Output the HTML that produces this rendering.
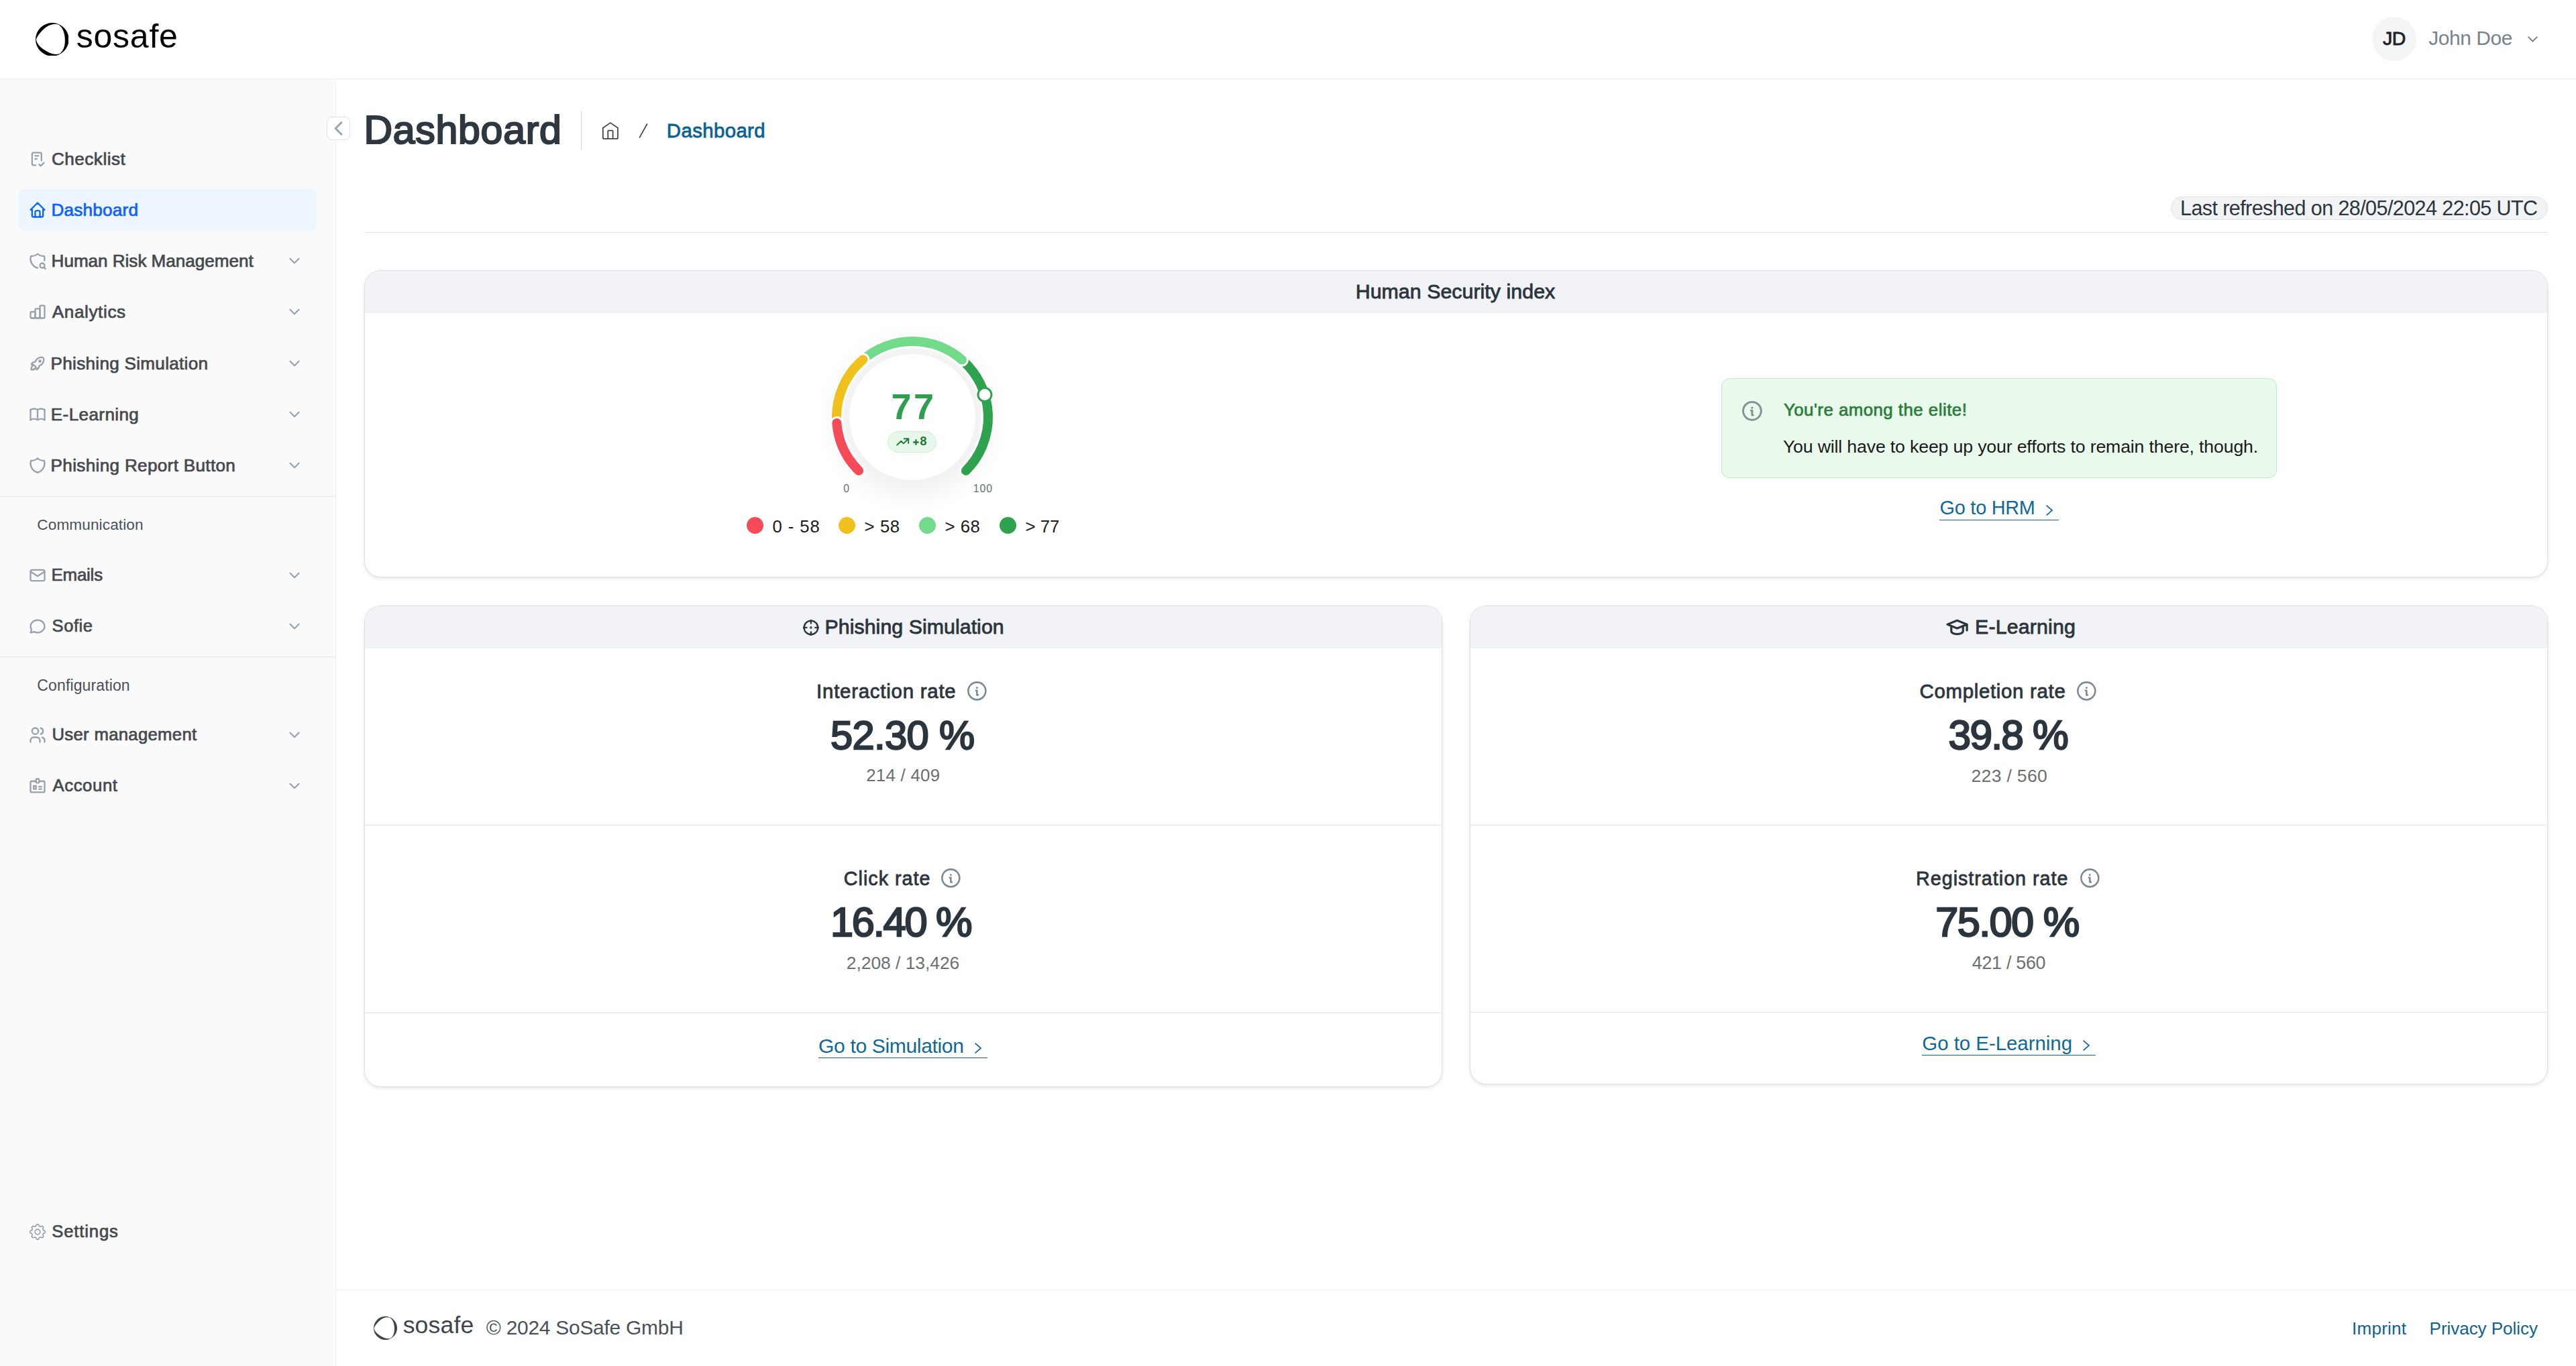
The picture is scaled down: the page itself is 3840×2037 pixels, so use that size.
<!DOCTYPE html><html><head><meta charset="utf-8"><style>
html,body{margin:0;padding:0;width:3840px;height:2037px;overflow:hidden;background:#fff;font-family:"Liberation Sans", sans-serif;}
.t{position:absolute;white-space:nowrap;}
svg{display:block}
@media (max-width:2600px){html{zoom:0.5}}
</style></head><body>
<div style="position:absolute;left:0px;top:117px;width:3840px;height:1px;background:#eceef3"></div>
<svg style="position:absolute;left:52.900000000000006px;top:33.8px" width="49.6" height="49.6" viewBox="-1 -1 2 2"><path fill="#000" fill-rule="evenodd" d="M-1 0 A1 1 0 1 0 1 0 A1 1 0 1 0 -1 0Z M-0.965 -0.010 L-0.954 -0.035 L-0.943 -0.059 L-0.931 -0.083 L-0.919 -0.106 L-0.907 -0.129 L-0.894 -0.151 L-0.881 -0.173 L-0.868 -0.194 L-0.855 -0.215 L-0.842 -0.235 L-0.828 -0.255 L-0.815 -0.274 L-0.801 -0.293 L-0.788 -0.312 L-0.774 -0.330 L-0.760 -0.348 L-0.746 -0.365 L-0.732 -0.383 L-0.718 -0.400 L-0.704 -0.416 L-0.690 -0.433 L-0.676 -0.449 L-0.662 -0.465 L-0.647 -0.481 L-0.633 -0.496 L-0.619 -0.512 L-0.604 -0.527 L-0.589 -0.542 L-0.575 -0.557 L-0.560 -0.572 L-0.545 -0.586 L-0.529 -0.601 L-0.514 -0.615 L-0.499 -0.629 L-0.483 -0.643 L-0.467 -0.657 L-0.451 -0.670 L-0.434 -0.684 L-0.417 -0.697 L-0.400 -0.710 L-0.383 -0.723 L-0.365 -0.736 L-0.347 -0.748 L-0.329 -0.760 L-0.310 -0.772 L-0.292 -0.784 L-0.272 -0.795 L-0.253 -0.806 L-0.233 -0.817 L-0.212 -0.827 L-0.192 -0.837 L-0.171 -0.846 L-0.149 -0.855 L-0.128 -0.864 L-0.105 -0.872 L-0.083 -0.879 L-0.060 -0.886 L-0.037 -0.892 L-0.014 -0.898 L0.009 -0.903 L0.033 -0.908 L0.057 -0.912 L0.082 -0.915 L0.106 -0.917 L0.131 -0.919 L0.156 -0.920 L0.180 -0.920 L0.205 -0.919 L0.230 -0.917 L0.255 -0.915 L0.280 -0.912 L0.305 -0.907 L0.330 -0.902 L0.355 -0.896 L0.379 -0.888 L0.400 -0.875 L0.421 -0.860 L0.441 -0.844 L0.460 -0.827 L0.479 -0.810 L0.497 -0.792 L0.514 -0.773 L0.530 -0.754 L0.546 -0.735 L0.561 -0.715 L0.575 -0.695 L0.588 -0.674 L0.601 -0.654 L0.613 -0.633 L0.625 -0.612 L0.636 -0.591 L0.646 -0.570 L0.656 -0.548 L0.665 -0.527 L0.673 -0.506 L0.681 -0.484 L0.689 -0.463 L0.696 -0.442 L0.702 -0.420 L0.708 -0.399 L0.714 -0.378 L0.719 -0.357 L0.724 -0.336 L0.729 -0.315 L0.733 -0.295 L0.737 -0.274 L0.740 -0.254 L0.744 -0.233 L0.747 -0.213 L0.750 -0.192 L0.752 -0.172 L0.755 -0.152 L0.757 -0.132 L0.759 -0.112 L0.760 -0.092 L0.762 -0.072 L0.763 -0.052 L0.764 -0.032 L0.765 -0.012 L0.766 0.008 L0.767 0.028 L0.767 0.048 L0.767 0.068 L0.767 0.089 L0.767 0.109 L0.767 0.130 L0.766 0.150 L0.765 0.171 L0.764 0.192 L0.762 0.213 L0.760 0.234 L0.758 0.255 L0.755 0.276 L0.752 0.298 L0.749 0.320 L0.745 0.341 L0.741 0.363 L0.736 0.385 L0.731 0.407 L0.725 0.429 L0.719 0.451 L0.712 0.473 L0.705 0.495 L0.696 0.517 L0.688 0.539 L0.678 0.561 L0.668 0.583 L0.658 0.605 L0.646 0.626 L0.634 0.648 L0.621 0.669 L0.608 0.689 L0.593 0.710 L0.578 0.730 L0.563 0.749 L0.546 0.768 L0.529 0.787 L0.511 0.805 L0.492 0.822 L0.472 0.838 L0.451 0.852 L0.428 0.863 L0.404 0.870 L0.379 0.876 L0.354 0.881 L0.329 0.885 L0.304 0.888 L0.279 0.890 L0.254 0.891 L0.229 0.892 L0.204 0.891 L0.179 0.890 L0.155 0.888 L0.131 0.885 L0.107 0.881 L0.083 0.877 L0.060 0.873 L0.036 0.868 L0.014 0.862 L-0.009 0.856 L-0.031 0.849 L-0.053 0.842 L-0.075 0.835 L-0.096 0.827 L-0.117 0.820 L-0.137 0.811 L-0.157 0.803 L-0.177 0.794 L-0.197 0.785 L-0.217 0.776 L-0.236 0.766 L-0.255 0.757 L-0.273 0.747 L-0.292 0.737 L-0.310 0.727 L-0.328 0.717 L-0.346 0.707 L-0.364 0.697 L-0.382 0.686 L-0.400 0.676 L-0.417 0.665 L-0.435 0.654 L-0.452 0.643 L-0.469 0.632 L-0.487 0.621 L-0.504 0.609 L-0.521 0.597 L-0.538 0.585 L-0.555 0.573 L-0.572 0.560 L-0.589 0.548 L-0.606 0.535 L-0.623 0.521 L-0.640 0.507 L-0.657 0.493 L-0.674 0.479 L-0.690 0.464 L-0.707 0.448 L-0.723 0.433 L-0.739 0.416 L-0.755 0.400 L-0.771 0.383 L-0.786 0.365 L-0.801 0.347 L-0.816 0.328 L-0.831 0.309 L-0.845 0.289 L-0.858 0.269 L-0.871 0.248 L-0.884 0.227 L-0.896 0.205 L-0.907 0.183 L-0.917 0.160 L-0.927 0.137 L-0.936 0.113 L-0.944 0.089 L-0.951 0.065 L-0.957 0.040 L-0.962 0.015Z"/></svg>
<div class="t" style="left:113.7px;top:29.4px;font-size:50.0px;line-height:50.0px;letter-spacing:0.78px;font-weight:400;color:#000;">sosafe</div>
<div style="position:absolute;left:3536px;top:25px;width:66px;height:66px;border-radius:50%;background:#f4f5f5"></div>
<div class="t" style="left:3552.0px;top:42.9px;font-size:28.5px;line-height:28.5px;letter-spacing:-0.6px;font-weight:400;color:#1d2125;-webkit-text-stroke:0.85px #1d2125;">JD</div>
<div class="t" style="left:3620.2px;top:41.6px;font-size:30.0px;line-height:30.0px;letter-spacing:-0.46px;font-weight:400;color:#79828b;">John Doe</div>
<svg style="position:absolute;left:3762.5px;top:46px;" width="25" height="25" viewBox="0 0 24 24" fill="none" stroke="#79828b" stroke-width="2" stroke-linecap="round" stroke-linejoin="round"><path d="M6 9l6 6l6 -6"/></svg>
<div style="position:absolute;left:0px;top:118px;width:500px;height:1919px;background:#fafafa;border-right:1px solid #eef0f5;border-top-right-radius:6px"></div>
<div style="position:absolute;left:28px;top:282px;width:444px;height:62px;border-radius:9px;background:#edf5ff"></div>
<svg style="position:absolute;left:42px;top:223px;" width="28" height="28" viewBox="0 0 24 24" fill="none" stroke="#98a2ad" stroke-width="2" stroke-linecap="round" stroke-linejoin="round"><path d="M9.615 20h-2.615a2 2 0 0 1 -2 -2v-12a2 2 0 0 1 2 -2h8a2 2 0 0 1 2 2v8"/><path d="M14 19l2 2l4 -4"/><path d="M9 8h4"/><path d="M9 12h2"/></svg>
<div class="t" style="left:76.9px;top:223.9px;font-size:26.1px;line-height:26.1px;letter-spacing:0.51px;font-weight:400;color:#46494e;-webkit-text-stroke:0.73px #46494e;">Checklist</div>
<svg style="position:absolute;left:42px;top:299px;" width="28" height="28" viewBox="0 0 24 24" fill="none" stroke="#0e62fa" stroke-width="2" stroke-linecap="round" stroke-linejoin="round"><path d="M5 12l-2 0l9 -9l9 9l-2 0"/><path d="M5 12v7a2 2 0 0 0 2 2h10a2 2 0 0 0 2 -2v-7"/><path d="M9 21v-6a2 2 0 0 1 2 -2h2a2 2 0 0 1 2 2v6"/></svg>
<div class="t" style="left:76.4px;top:299.9px;font-size:26.1px;line-height:26.1px;letter-spacing:0.25px;font-weight:400;color:#0e62fa;-webkit-text-stroke:0.73px #0e62fa;">Dashboard</div>
<svg style="position:absolute;left:42px;top:375px;" width="28" height="28" viewBox="0 0 24 24" fill="none" stroke="#98a2ad" stroke-width="2" stroke-linecap="round" stroke-linejoin="round"><path d="M12 21a12 12 0 0 1 -8.5 -15a12 12 0 0 0 8.5 -3a12 12 0 0 0 8.5 3c.539 1.832 .627 3.747 .283 5.588"/><path d="M15 18a3 3 0 1 0 6 0a3 3 0 1 0 -6 0"/><path d="M20.2 20.2l1.8 1.8"/></svg>
<div class="t" style="left:76.6px;top:375.9px;font-size:26.1px;line-height:26.1px;letter-spacing:-0.03px;font-weight:400;color:#46494e;-webkit-text-stroke:0.73px #46494e;">Human Risk Management</div>
<svg style="position:absolute;left:425.6px;top:376px;" width="26" height="26" viewBox="0 0 24 24" fill="none" stroke="#98a2ad" stroke-width="2" stroke-linecap="round" stroke-linejoin="round"><path d="M6 9l6 6l6 -6"/></svg>
<svg style="position:absolute;left:42px;top:451px;" width="28" height="28" viewBox="0 0 24 24" fill="none" stroke="#98a2ad" stroke-width="2" stroke-linecap="round" stroke-linejoin="round"><path d="M3 13a1 1 0 0 1 1 -1h4a1 1 0 0 1 1 1v6a1 1 0 0 1 -1 1h-4a1 1 0 0 1 -1 -1z"/><path d="M9 9a1 1 0 0 1 1 -1h4a1 1 0 0 1 1 1v10a1 1 0 0 1 -1 1h-4a1 1 0 0 1 -1 -1z"/><path d="M15 5a1 1 0 0 1 1 -1h4a1 1 0 0 1 1 1v14a1 1 0 0 1 -1 1h-4a1 1 0 0 1 -1 -1z"/><path d="M4 20h14"/></svg>
<div class="t" style="left:77.8px;top:451.9px;font-size:26.1px;line-height:26.1px;letter-spacing:0.61px;font-weight:400;color:#46494e;-webkit-text-stroke:0.73px #46494e;">Analytics</div>
<svg style="position:absolute;left:425.6px;top:452px;" width="26" height="26" viewBox="0 0 24 24" fill="none" stroke="#98a2ad" stroke-width="2" stroke-linecap="round" stroke-linejoin="round"><path d="M6 9l6 6l6 -6"/></svg>
<svg style="position:absolute;left:42px;top:528px;" width="28" height="28" viewBox="0 0 24 24" fill="none" stroke="#98a2ad" stroke-width="2" stroke-linecap="round" stroke-linejoin="round"><path d="M4 13a8 8 0 0 1 7 7a6 6 0 0 0 3 -5a9 9 0 0 0 6 -8a3 3 0 0 0 -3 -3a9 9 0 0 0 -8 6a6 6 0 0 0 -5 3"/><path d="M7 14a6 6 0 0 0 -3 6a6 6 0 0 0 6 -3"/><path d="M14 9a1 1 0 1 0 2 0a1 1 0 1 0 -2 0"/></svg>
<div class="t" style="left:75.6px;top:528.9px;font-size:26.1px;line-height:26.1px;letter-spacing:0.29px;font-weight:400;color:#46494e;-webkit-text-stroke:0.73px #46494e;">Phishing Simulation</div>
<svg style="position:absolute;left:425.6px;top:529px;" width="26" height="26" viewBox="0 0 24 24" fill="none" stroke="#98a2ad" stroke-width="2" stroke-linecap="round" stroke-linejoin="round"><path d="M6 9l6 6l6 -6"/></svg>
<svg style="position:absolute;left:42px;top:604px;" width="28" height="28" viewBox="0 0 24 24" fill="none" stroke="#98a2ad" stroke-width="2" stroke-linecap="round" stroke-linejoin="round"><path d="M3 19a9 9 0 0 1 9 0a9 9 0 0 1 9 0"/><path d="M3 6a9 9 0 0 1 9 0a9 9 0 0 1 9 0"/><path d="M3 6l0 13"/><path d="M12 6l0 13"/><path d="M21 6l0 13"/></svg>
<div class="t" style="left:75.8px;top:604.9px;font-size:26.1px;line-height:26.1px;letter-spacing:0.38px;font-weight:400;color:#46494e;-webkit-text-stroke:0.73px #46494e;">E-Learning</div>
<svg style="position:absolute;left:425.6px;top:605px;" width="26" height="26" viewBox="0 0 24 24" fill="none" stroke="#98a2ad" stroke-width="2" stroke-linecap="round" stroke-linejoin="round"><path d="M6 9l6 6l6 -6"/></svg>
<svg style="position:absolute;left:42px;top:680px;" width="28" height="28" viewBox="0 0 24 24" fill="none" stroke="#98a2ad" stroke-width="2" stroke-linecap="round" stroke-linejoin="round"><path d="M12 3a12 12 0 0 0 8.5 3a12 12 0 0 1 -8.5 15a12 12 0 0 1 -8.5 -15a12 12 0 0 0 8.5 -3"/></svg>
<div class="t" style="left:75.6px;top:680.9px;font-size:26.1px;line-height:26.1px;letter-spacing:0.33px;font-weight:400;color:#46494e;-webkit-text-stroke:0.73px #46494e;">Phishing Report Button</div>
<svg style="position:absolute;left:425.6px;top:681px;" width="26" height="26" viewBox="0 0 24 24" fill="none" stroke="#98a2ad" stroke-width="2" stroke-linecap="round" stroke-linejoin="round"><path d="M6 9l6 6l6 -6"/></svg>
<svg style="position:absolute;left:42px;top:843.7px;" width="28" height="28" viewBox="0 0 24 24" fill="none" stroke="#98a2ad" stroke-width="2" stroke-linecap="round" stroke-linejoin="round"><path d="M3 7a2 2 0 0 1 2 -2h14a2 2 0 0 1 2 2v10a2 2 0 0 1 -2 2h-14a2 2 0 0 1 -2 -2v-10z"/><path d="M3 7l9 6l9 -6"/></svg>
<div class="t" style="left:76.6px;top:844.8px;font-size:25.9px;line-height:25.9px;letter-spacing:-0.24px;font-weight:400;color:#46494e;-webkit-text-stroke:0.73px #46494e;">Emails</div>
<svg style="position:absolute;left:425.6px;top:844.7px;" width="26" height="26" viewBox="0 0 24 24" fill="none" stroke="#98a2ad" stroke-width="2" stroke-linecap="round" stroke-linejoin="round"><path d="M6 9l6 6l6 -6"/></svg>
<svg style="position:absolute;left:42px;top:919.7px;" width="28" height="28" viewBox="0 0 24 24" fill="none" stroke="#98a2ad" stroke-width="2" stroke-linecap="round" stroke-linejoin="round"><path d="M3 20l1.3 -3.9c-2.324 -3.437 -1.426 -7.872 2.1 -10.374c3.526 -2.501 8.59 -2.296 11.845 .48c3.255 2.777 3.695 7.266 1.029 10.501c-2.666 3.235 -7.615 4.215 -11.574 2.293l-4.7 1"/></svg>
<div class="t" style="left:77.6px;top:920.9px;font-size:25.5px;line-height:25.5px;letter-spacing:0.55px;font-weight:400;color:#46494e;-webkit-text-stroke:0.71px #46494e;">Sofie</div>
<svg style="position:absolute;left:425.6px;top:920.7px;" width="26" height="26" viewBox="0 0 24 24" fill="none" stroke="#98a2ad" stroke-width="2" stroke-linecap="round" stroke-linejoin="round"><path d="M6 9l6 6l6 -6"/></svg>
<svg style="position:absolute;left:42px;top:1082px;" width="28" height="28" viewBox="0 0 24 24" fill="none" stroke="#98a2ad" stroke-width="2" stroke-linecap="round" stroke-linejoin="round"><path d="M5 7a4 4 0 1 0 8 0a4 4 0 1 0 -8 0"/><path d="M3 21v-2a4 4 0 0 1 4 -4h4a4 4 0 0 1 4 4v2"/><path d="M16 3.13a4 4 0 0 1 0 7.75"/><path d="M21 21v-2a4 4 0 0 0 -3 -3.85"/></svg>
<div class="t" style="left:77.5px;top:1083.1px;font-size:25.7px;line-height:25.7px;letter-spacing:0.31px;font-weight:400;color:#46494e;-webkit-text-stroke:0.72px #46494e;">User management</div>
<svg style="position:absolute;left:425.6px;top:1083px;" width="26" height="26" viewBox="0 0 24 24" fill="none" stroke="#98a2ad" stroke-width="2" stroke-linecap="round" stroke-linejoin="round"><path d="M6 9l6 6l6 -6"/></svg>
<svg style="position:absolute;left:42px;top:1158px;" width="28" height="28" viewBox="0 0 24 24" fill="none" stroke="#98a2ad" stroke-width="2" stroke-linecap="round" stroke-linejoin="round"><path d="M7 12h3v4h-3z"/><path d="M10 6h-6a1 1 0 0 0 -1 1v12a1 1 0 0 0 1 1h16a1 1 0 0 0 1 -1v-12a1 1 0 0 0 -1 -1h-6"/><path d="M10 4a1 1 0 0 1 1 -1h2a1 1 0 0 1 1 1v3a1 1 0 0 1 -1 1h-2a1 1 0 0 1 -1 -1z"/><path d="M14 13h3"/><path d="M14 16h3"/></svg>
<div class="t" style="left:78.5px;top:1159.1px;font-size:25.7px;line-height:25.7px;letter-spacing:0.6px;font-weight:400;color:#46494e;-webkit-text-stroke:0.72px #46494e;">Account</div>
<svg style="position:absolute;left:425.6px;top:1159px;" width="26" height="26" viewBox="0 0 24 24" fill="none" stroke="#98a2ad" stroke-width="2" stroke-linecap="round" stroke-linejoin="round"><path d="M6 9l6 6l6 -6"/></svg>
<div style="position:absolute;left:0px;top:740px;width:500px;height:1px;background:#e6e8ec"></div>
<div style="position:absolute;left:0px;top:979px;width:500px;height:1px;background:#e6e8ec"></div>
<div class="t" style="left:55.3px;top:772.3px;font-size:22.6px;line-height:22.6px;letter-spacing:0.11px;font-weight:400;color:#4a5058;">Communication</div>
<div class="t" style="left:55.3px;top:1010.7px;font-size:23.0px;line-height:23.0px;letter-spacing:0.13px;font-weight:400;color:#4a5058;">Configuration</div>
<svg style="position:absolute;left:42px;top:1823px;" width="28" height="28" viewBox="0 0 24 24" fill="none" stroke="#98a2ad" stroke-width="1.45" stroke-linecap="round" stroke-linejoin="round"><path d="M12.00 2.45 L12.62 2.47 L13.22 2.73 L13.67 3.61 L14.01 4.51 L14.43 4.85 L14.89 5.02 L15.34 5.23 L15.88 5.29 L16.75 4.89 L17.69 4.58 L18.30 4.82 L18.75 5.25 L19.18 5.70 L19.42 6.31 L19.11 7.25 L18.71 8.12 L18.77 8.66 L18.98 9.11 L19.15 9.57 L19.49 9.99 L20.39 10.33 L21.27 10.78 L21.53 11.38 L21.55 12.00 L21.53 12.62 L21.27 13.22 L20.39 13.67 L19.49 14.01 L19.15 14.43 L18.98 14.89 L18.77 15.34 L18.71 15.87 L19.11 16.75 L19.42 17.69 L19.18 18.30 L18.75 18.75 L18.30 19.18 L17.69 19.42 L16.75 19.11 L15.88 18.71 L15.34 18.77 L14.89 18.98 L14.43 19.15 L14.01 19.49 L13.67 20.39 L13.22 21.27 L12.62 21.53 L12.00 21.55 L11.38 21.53 L10.78 21.27 L10.33 20.39 L9.99 19.49 L9.57 19.15 L9.11 18.98 L8.66 18.77 L8.13 18.71 L7.25 19.11 L6.31 19.42 L5.70 19.18 L5.25 18.75 L4.82 18.30 L4.58 17.69 L4.89 16.75 L5.29 15.88 L5.23 15.34 L5.02 14.89 L4.85 14.43 L4.51 14.01 L3.61 13.67 L2.73 13.22 L2.47 12.62 L2.45 12.00 L2.47 11.38 L2.73 10.78 L3.61 10.33 L4.51 9.99 L4.85 9.57 L5.02 9.11 L5.23 8.66 L5.29 8.12 L4.89 7.25 L4.58 6.31 L4.82 5.70 L5.25 5.25 L5.70 4.82 L6.31 4.58 L7.25 4.89 L8.12 5.29 L8.66 5.23 L9.11 5.02 L9.57 4.85 L9.99 4.51 L10.33 3.61 L10.78 2.73 L11.38 2.47 L12.00 2.45 Z"/><circle cx="12" cy="12" r="3.3"/></svg>
<div class="t" style="left:77.2px;top:1824.1px;font-size:25.7px;line-height:25.7px;letter-spacing:0.84px;font-weight:400;color:#46494e;-webkit-text-stroke:0.72px #46494e;">Settings</div>
<div style="position:absolute;left:487px;top:174px;width:33px;height:33px;border:1px solid #dfe3e8;border-radius:8px;background:#fff;box-sizing:content-box"></div>
<svg style="position:absolute;left:487px;top:174px;" width="35" height="35" viewBox="0 0 24 24" fill="none" stroke="#9aa3ad" stroke-width="2" stroke-linecap="round" stroke-linejoin="round"><path d="M15 6l-6 6l6 6"/></svg>
<div class="t" style="left:542.4px;top:164.9px;font-size:59.0px;line-height:59.0px;letter-spacing:0.73px;font-weight:400;color:#2f3840;-webkit-text-stroke:2.24px #2f3840;">Dashboard</div>
<div style="position:absolute;left:866px;top:166px;width:1.2px;height:58px;background:#d9dcdf"></div>
<svg style="position:absolute;left:890px;top:175px" width="40" height="40" viewBox="890 175 40 40"><path d="M898.8 190.8L909.9 183.1L921 190.8V205.2Q921 206.9 919.3 206.9H900.5Q898.8 206.9 898.8 205.2Z M906.3 206.9V195.8Q906.3 194.7 907.4 194.7H912.5Q913.6 194.7 913.6 195.8V206.9" fill="none" stroke="#3e4449" stroke-width="1.75" stroke-linejoin="round"/></svg>
<svg style="position:absolute;left:940px;top:175px" width="40" height="40" viewBox="940 175 40 40"><path d="M953.2 205.3L964.8 184.5" stroke="#3e4449" stroke-width="1.7" stroke-linecap="butt"/></svg>
<div class="t" style="left:993.8px;top:180.1px;font-size:29.4px;line-height:29.4px;letter-spacing:0.38px;font-weight:400;color:#0b6292;-webkit-text-stroke:0.82px #0b6292;">Dashboard</div>
<div style="position:absolute;left:543px;top:346px;width:3255px;height:1px;background:#dcdfe3"></div>
<div style="position:absolute;left:3236px;top:293px;width:560px;height:33px;border:1px solid #dfe2e6;border-radius:18px;background:#f1f3f5"></div>
<div class="t" style="left:3250.0px;top:294.5px;font-size:30.6px;line-height:30.6px;letter-spacing:-0.62px;font-weight:400;color:#2d343b;">Last refreshed on 28/05/2024 22:05 UTC</div>
<div style="position:absolute;left:543px;top:403px;width:3255px;height:458px;box-sizing:border-box;border:1px solid #dde1e6;border-radius:24px;background:#fff;box-shadow:0 2px 5px rgba(0,0,0,0.10);overflow:hidden"><div style="position:absolute;left:0;top:0;right:0;height:63px;background:#f1f3f6"></div></div>
<div class="t" style="left:2020.7px;top:419.7px;font-size:30.3px;line-height:30.3px;letter-spacing:0.06px;font-weight:400;color:#2c353d;-webkit-text-stroke:0.85px #2c353d;">Human Security index</div>
<div style="position:absolute;left:543px;top:903px;width:1607px;height:718px;box-sizing:border-box;border:1px solid #dde1e6;border-radius:24px;background:#fff;box-shadow:0 2px 5px rgba(0,0,0,0.10);overflow:hidden"><div style="position:absolute;left:0;top:0;right:0;height:63px;background:#f1f3f6"></div></div>
<div style="position:absolute;left:2191px;top:903px;width:1607px;height:714px;box-sizing:border-box;border:1px solid #dde1e6;border-radius:24px;background:#fff;box-shadow:0 2px 5px rgba(0,0,0,0.10);overflow:hidden"><div style="position:absolute;left:0;top:0;right:0;height:63px;background:#f1f3f6"></div></div>
<div style="position:absolute;left:544px;top:1230px;width:1605px;height:1px;background:#dfe3e8"></div>
<div style="position:absolute;left:544px;top:1510px;width:1605px;height:1px;background:#dfe3e8"></div>
<div style="position:absolute;left:2192px;top:1230px;width:1605px;height:1px;background:#dfe3e8"></div>
<div style="position:absolute;left:2192px;top:1509px;width:1605px;height:1px;background:#dfe3e8"></div>
<svg style="position:absolute;left:1195.8px;top:923.1999999999999px;" width="25.8" height="25.8" viewBox="0 0 24 24" fill="none" stroke="#2c353d" stroke-width="2.2" stroke-linecap="round" stroke-linejoin="round"><circle cx="12" cy="12" r="9.6"/><path d="M12 1.8v4.2M12 18v4.2M1.8 12h4.2M18 12h4.2"/><circle cx="12" cy="12" r="0.6" fill="#2c353d"/></svg>
<div class="t" style="left:1229.5px;top:919.7px;font-size:30.3px;line-height:30.3px;letter-spacing:0.06px;font-weight:400;color:#2c353d;-webkit-text-stroke:0.85px #2c353d;">Phishing Simulation</div>
<svg style="position:absolute;left:2899.5px;top:918.4px;" width="35" height="35" viewBox="0 0 24 24" fill="none" stroke="#2c353d" stroke-width="2.2" stroke-linecap="round" stroke-linejoin="round"><path d="M22 9l-10 -4l-10 4l10 4l10 -4v6"/><path d="M6 10.6v5.4a6 3 0 0 0 12 0v-5.4"/></svg>
<div class="t" style="left:2944.0px;top:919.7px;font-size:30.3px;line-height:30.3px;letter-spacing:0.17px;font-weight:400;color:#2c353d;-webkit-text-stroke:0.85px #2c353d;">E-Learning</div>
<div style="position:absolute;left:1266.4px;top:527.8px;width:188px;height:188px;border-radius:50%;background:#fff;box-shadow:0 2px 36px 22px rgba(0,0,0,0.058)"></div>
<svg style="position:absolute;left:1210.4px;top:471.79999999999995px" width="300" height="300" viewBox="0 0 300 300"><path d="M223.99 64.59 A113 113 0 0 1 229.90 229.90" stroke="#fff" stroke-width="20" stroke-linecap="round" fill="none"/><path d="M223.99 64.59 A113 113 0 0 1 229.90 229.90" stroke="#2fa24f" stroke-width="14" stroke-linecap="round" fill="none"/><path d="M76.46 64.20 A113 113 0 0 1 223.99 64.59" stroke="#fff" stroke-width="20" stroke-linecap="round" fill="none"/><path d="M76.46 64.20 A113 113 0 0 1 223.99 64.59" stroke="#72da8b" stroke-width="14" stroke-linecap="round" fill="none"/><path d="M37.35 158.87 A113 113 0 0 1 76.46 64.20" stroke="#fff" stroke-width="20" stroke-linecap="round" fill="none"/><path d="M37.35 158.87 A113 113 0 0 1 76.46 64.20" stroke="#f0c11d" stroke-width="14" stroke-linecap="round" fill="none"/><path d="M70.10 229.90 A113 113 0 0 1 37.35 158.87" stroke="#fff" stroke-width="20" stroke-linecap="round" fill="none"/><path d="M70.10 229.90 A113 113 0 0 1 37.35 158.87" stroke="#f54b58" stroke-width="14" stroke-linecap="round" fill="none"/><circle cx="257.95" cy="116.58" r="10" fill="#fff" stroke="#2fa24f" stroke-width="3"/></svg>
<div class="t" style="left:1328.5px;top:579.0px;font-size:54.1px;line-height:54.1px;letter-spacing:3.4px;font-weight:700;color:#2e9e4f;">77</div>
<div style="position:absolute;left:1323.3px;top:643.2px;width:70.5px;height:30px;border:1px solid #cdeed4;border-radius:16px;background:#e7f8ea"></div>
<svg style="position:absolute;left:1320px;top:640px" width="80" height="40" viewBox="1320 640 80 40"><path d="M1337.2 663.6L1343.3 657.8L1346.8 661.4L1354.2 654.3M1347.8 654.3L1354.2 654.3L1354.2 660.9" fill="none" stroke="#217a3b" stroke-width="2" stroke-linecap="round" stroke-linejoin="round"/><path d="M1361.2 659.5h8.4M1365.4 655.3v8.5" stroke="#217a3b" stroke-width="2.3"/></svg>
<div class="t" style="left:1371.2px;top:649px;font-size:18.5px;line-height:18.5px;font-weight:700;color:#217a3b">8</div>
<div class="t" style="left:1257.2px;top:721.2px;font-size:15.8px;line-height:15.8px;letter-spacing:0.0px;font-weight:400;color:#6b6e72;">0</div>
<div class="t" style="left:1450.7px;top:721.2px;font-size:15.8px;line-height:15.8px;letter-spacing:0.95px;font-weight:400;color:#6b6e72;">100</div>
<div style="position:absolute;left:1113.0px;top:771px;width:25px;height:25px;border-radius:50%;background:#f54b58"></div>
<div style="position:absolute;left:1250.0px;top:771px;width:25px;height:25px;border-radius:50%;background:#f0c11d"></div>
<div style="position:absolute;left:1369.5px;top:771px;width:25px;height:25px;border-radius:50%;background:#72da8b"></div>
<div style="position:absolute;left:1489.5px;top:771px;width:25px;height:25px;border-radius:50%;background:#2fa24f"></div>
<div class="t" style="left:1151.5px;top:772.9px;font-size:25.7px;line-height:25.7px;letter-spacing:0.9px;font-weight:400;color:#1a1a1a;">0 - 58</div>
<div class="t" style="left:1288.5px;top:772.9px;font-size:25.7px;line-height:25.7px;letter-spacing:0.62px;font-weight:400;color:#1a1a1a;">&gt; 58</div>
<div class="t" style="left:1408.5px;top:772.9px;font-size:25.7px;line-height:25.7px;letter-spacing:0.56px;font-weight:400;color:#1a1a1a;">&gt; 68</div>
<div class="t" style="left:1528.4px;top:772.9px;font-size:25.7px;line-height:25.7px;letter-spacing:0.07px;font-weight:400;color:#1a1a1a;">&gt; 77</div>
<div style="position:absolute;left:2566px;top:564px;width:826px;height:147px;border:1px solid #bdecc6;border-radius:12px;background:#e9f9ec"></div>
<svg style="position:absolute;left:2594.38px;top:594.98px" width="35.73" height="35.73" viewBox="0 0 24 24" fill="none" stroke="#878f97" stroke-width="1.948" stroke-linecap="round" stroke-linejoin="round"><path d="M3 12a9 9 0 1 0 18 0a9 9 0 0 0 -18 0"/><path d="M12 8.8h.01" stroke-width="2.240"/><path d="M11 11.6h1v4.6h1"/></svg>
<div class="t" style="left:2658.9px;top:598.5px;font-size:25.8px;line-height:25.8px;letter-spacing:0.49px;font-weight:400;color:#2a7d3a;-webkit-text-stroke:0.72px #2a7d3a;">You're among the elite!</div>
<div class="t" style="left:2657.9px;top:653.0px;font-size:26.7px;line-height:26.7px;letter-spacing:-0.16px;font-weight:400;color:#1a1a1a;">You will have to keep up your efforts to remain there, though.</div>
<div class="t" style="left:2891.6px;top:743.3px;font-size:28.8px;line-height:28.8px;letter-spacing:-0.22px;font-weight:400;color:#0f6896;">Go to HRM</div>
<svg style="position:absolute;left:3038.8px;top:741px" width="30" height="40" viewBox="3038.8 741 30 40"><path d="M3050.4 753.6L3058.8 761.0L3050.4 768.4" fill="none" stroke="#0f6896" stroke-width="1.7"/></svg>
<div style="position:absolute;left:2891.2px;top:774.8px;width:178px;height:1.5px;background:#0f6896"></div>
<div class="t" style="left:1217.1px;top:1016.2px;font-size:29.4px;line-height:29.4px;letter-spacing:0.77px;font-weight:400;color:#2c353d;-webkit-text-stroke:0.82px #2c353d;">Interaction rate</div>
<svg style="position:absolute;left:1439.17px;top:1012.97px" width="34.67" height="34.67" viewBox="0 0 24 24" fill="none" stroke="#7f8994" stroke-width="1.800" stroke-linecap="round" stroke-linejoin="round"><path d="M3 12a9 9 0 1 0 18 0a9 9 0 0 0 -18 0"/><path d="M12 8.8h.01" stroke-width="2.070"/><path d="M11 11.6h1v4.6h1"/></svg>
<div class="t" style="left:1237.9px;top:1066.5px;font-size:59.7px;line-height:59.7px;letter-spacing:-0.65px;font-weight:400;color:#2c353d;-webkit-text-stroke:2.27px #2c353d;">52.30 %</div>
<div class="t" style="left:1291.2px;top:1144.2px;font-size:25.8px;line-height:25.8px;letter-spacing:0.28px;font-weight:400;color:#6b6e72;">214 / 409</div>
<div class="t" style="left:1257.8px;top:1296.2px;font-size:28.7px;line-height:28.7px;letter-spacing:1.02px;font-weight:400;color:#2c353d;-webkit-text-stroke:0.8px #2c353d;">Click rate</div>
<svg style="position:absolute;left:1400.37px;top:1291.97px" width="34.67" height="34.67" viewBox="0 0 24 24" fill="none" stroke="#7f8994" stroke-width="1.800" stroke-linecap="round" stroke-linejoin="round"><path d="M3 12a9 9 0 1 0 18 0a9 9 0 0 0 -18 0"/><path d="M12 8.8h.01" stroke-width="2.070"/><path d="M11 11.6h1v4.6h1"/></svg>
<div class="t" style="left:1238.0px;top:1345.4px;font-size:61.3px;line-height:61.3px;letter-spacing:-2.22px;font-weight:400;color:#2c353d;-webkit-text-stroke:2.33px #2c353d;">16.40 %</div>
<div class="t" style="left:1261.8px;top:1422.9px;font-size:26.4px;line-height:26.4px;letter-spacing:-0.02px;font-weight:400;color:#6b6e72;">2,208 / 13,426</div>
<div class="t" style="left:2861.5px;top:1016.2px;font-size:29.4px;line-height:29.4px;letter-spacing:0.7px;font-weight:400;color:#2c353d;-webkit-text-stroke:0.82px #2c353d;">Completion rate</div>
<svg style="position:absolute;left:3092.97px;top:1012.97px" width="34.67" height="34.67" viewBox="0 0 24 24" fill="none" stroke="#7f8994" stroke-width="1.800" stroke-linecap="round" stroke-linejoin="round"><path d="M3 12a9 9 0 1 0 18 0a9 9 0 0 0 -18 0"/><path d="M12 8.8h.01" stroke-width="2.070"/><path d="M11 11.6h1v4.6h1"/></svg>
<div class="t" style="left:2904.6px;top:1066.4px;font-size:60.4px;line-height:60.4px;letter-spacing:-1.76px;font-weight:400;color:#2c353d;-webkit-text-stroke:2.3px #2c353d;">39.8 %</div>
<div class="t" style="left:2938.5px;top:1144.1px;font-size:26.5px;line-height:26.5px;letter-spacing:0.34px;font-weight:400;color:#6b6e72;">223 / 560</div>
<div class="t" style="left:2856.0px;top:1296.2px;font-size:28.7px;line-height:28.7px;letter-spacing:1.0px;font-weight:400;color:#2c353d;-webkit-text-stroke:0.8px #2c353d;">Registration rate</div>
<svg style="position:absolute;left:3097.57px;top:1291.97px" width="34.67" height="34.67" viewBox="0 0 24 24" fill="none" stroke="#7f8994" stroke-width="1.800" stroke-linecap="round" stroke-linejoin="round"><path d="M3 12a9 9 0 1 0 18 0a9 9 0 0 0 -18 0"/><path d="M12 8.8h.01" stroke-width="2.070"/><path d="M11 11.6h1v4.6h1"/></svg>
<div class="t" style="left:2885.3px;top:1345.4px;font-size:61.3px;line-height:61.3px;letter-spacing:-1.67px;font-weight:400;color:#2c353d;-webkit-text-stroke:2.33px #2c353d;">75.00 %</div>
<div class="t" style="left:2939.8px;top:1422.8px;font-size:26.8px;line-height:26.8px;letter-spacing:-0.26px;font-weight:400;color:#6b6e72;">421 / 560</div>
<div class="t" style="left:1220.0px;top:1544.5px;font-size:30.1px;line-height:30.1px;letter-spacing:-0.37px;font-weight:400;color:#0f6896;">Go to Simulation</div>
<svg style="position:absolute;left:1442.0px;top:1542.8px" width="30" height="40" viewBox="1442.0 1542.8 30 40"><path d="M1453.6 1555.4L1462.0 1562.8L1453.6 1570.2" fill="none" stroke="#0f6896" stroke-width="1.7"/></svg>
<div style="position:absolute;left:1220px;top:1576.5px;width:252px;height:1.5px;background:#0f6896"></div>
<div class="t" style="left:2865.3px;top:1541.1px;font-size:29.4px;line-height:29.4px;letter-spacing:-0.01px;font-weight:400;color:#0f6896;">Go to E-Learning</div>
<svg style="position:absolute;left:3094.0px;top:1539.0px" width="30" height="40" viewBox="3094.0 1539.0 30 40"><path d="M3105.6 1551.6L3114.0 1559.0L3105.6 1566.4" fill="none" stroke="#0f6896" stroke-width="1.7"/></svg>
<div style="position:absolute;left:2865px;top:1572.5px;width:259px;height:1.5px;background:#0f6896"></div>
<div style="position:absolute;left:501px;top:1923px;width:3339px;height:1px;background:#eef0f4"></div>
<svg style="position:absolute;left:557.0px;top:1962.8px" width="35.0" height="35.0" viewBox="-1 -1 2 2"><path fill="#3d444b" fill-rule="evenodd" d="M-1 0 A1 1 0 1 0 1 0 A1 1 0 1 0 -1 0Z M-0.965 -0.010 L-0.954 -0.035 L-0.943 -0.059 L-0.931 -0.083 L-0.919 -0.106 L-0.907 -0.129 L-0.894 -0.151 L-0.881 -0.173 L-0.868 -0.194 L-0.855 -0.215 L-0.842 -0.235 L-0.828 -0.255 L-0.815 -0.274 L-0.801 -0.293 L-0.788 -0.312 L-0.774 -0.330 L-0.760 -0.348 L-0.746 -0.365 L-0.732 -0.383 L-0.718 -0.400 L-0.704 -0.416 L-0.690 -0.433 L-0.676 -0.449 L-0.662 -0.465 L-0.647 -0.481 L-0.633 -0.496 L-0.619 -0.512 L-0.604 -0.527 L-0.589 -0.542 L-0.575 -0.557 L-0.560 -0.572 L-0.545 -0.586 L-0.529 -0.601 L-0.514 -0.615 L-0.499 -0.629 L-0.483 -0.643 L-0.467 -0.657 L-0.451 -0.670 L-0.434 -0.684 L-0.417 -0.697 L-0.400 -0.710 L-0.383 -0.723 L-0.365 -0.736 L-0.347 -0.748 L-0.329 -0.760 L-0.310 -0.772 L-0.292 -0.784 L-0.272 -0.795 L-0.253 -0.806 L-0.233 -0.817 L-0.212 -0.827 L-0.192 -0.837 L-0.171 -0.846 L-0.149 -0.855 L-0.128 -0.864 L-0.105 -0.872 L-0.083 -0.879 L-0.060 -0.886 L-0.037 -0.892 L-0.014 -0.898 L0.009 -0.903 L0.033 -0.908 L0.057 -0.912 L0.082 -0.915 L0.106 -0.917 L0.131 -0.919 L0.156 -0.920 L0.180 -0.920 L0.205 -0.919 L0.230 -0.917 L0.255 -0.915 L0.280 -0.912 L0.305 -0.907 L0.330 -0.902 L0.355 -0.896 L0.379 -0.888 L0.400 -0.875 L0.421 -0.860 L0.441 -0.844 L0.460 -0.827 L0.479 -0.810 L0.497 -0.792 L0.514 -0.773 L0.530 -0.754 L0.546 -0.735 L0.561 -0.715 L0.575 -0.695 L0.588 -0.674 L0.601 -0.654 L0.613 -0.633 L0.625 -0.612 L0.636 -0.591 L0.646 -0.570 L0.656 -0.548 L0.665 -0.527 L0.673 -0.506 L0.681 -0.484 L0.689 -0.463 L0.696 -0.442 L0.702 -0.420 L0.708 -0.399 L0.714 -0.378 L0.719 -0.357 L0.724 -0.336 L0.729 -0.315 L0.733 -0.295 L0.737 -0.274 L0.740 -0.254 L0.744 -0.233 L0.747 -0.213 L0.750 -0.192 L0.752 -0.172 L0.755 -0.152 L0.757 -0.132 L0.759 -0.112 L0.760 -0.092 L0.762 -0.072 L0.763 -0.052 L0.764 -0.032 L0.765 -0.012 L0.766 0.008 L0.767 0.028 L0.767 0.048 L0.767 0.068 L0.767 0.089 L0.767 0.109 L0.767 0.130 L0.766 0.150 L0.765 0.171 L0.764 0.192 L0.762 0.213 L0.760 0.234 L0.758 0.255 L0.755 0.276 L0.752 0.298 L0.749 0.320 L0.745 0.341 L0.741 0.363 L0.736 0.385 L0.731 0.407 L0.725 0.429 L0.719 0.451 L0.712 0.473 L0.705 0.495 L0.696 0.517 L0.688 0.539 L0.678 0.561 L0.668 0.583 L0.658 0.605 L0.646 0.626 L0.634 0.648 L0.621 0.669 L0.608 0.689 L0.593 0.710 L0.578 0.730 L0.563 0.749 L0.546 0.768 L0.529 0.787 L0.511 0.805 L0.492 0.822 L0.472 0.838 L0.451 0.852 L0.428 0.863 L0.404 0.870 L0.379 0.876 L0.354 0.881 L0.329 0.885 L0.304 0.888 L0.279 0.890 L0.254 0.891 L0.229 0.892 L0.204 0.891 L0.179 0.890 L0.155 0.888 L0.131 0.885 L0.107 0.881 L0.083 0.877 L0.060 0.873 L0.036 0.868 L0.014 0.862 L-0.009 0.856 L-0.031 0.849 L-0.053 0.842 L-0.075 0.835 L-0.096 0.827 L-0.117 0.820 L-0.137 0.811 L-0.157 0.803 L-0.177 0.794 L-0.197 0.785 L-0.217 0.776 L-0.236 0.766 L-0.255 0.757 L-0.273 0.747 L-0.292 0.737 L-0.310 0.727 L-0.328 0.717 L-0.346 0.707 L-0.364 0.697 L-0.382 0.686 L-0.400 0.676 L-0.417 0.665 L-0.435 0.654 L-0.452 0.643 L-0.469 0.632 L-0.487 0.621 L-0.504 0.609 L-0.521 0.597 L-0.538 0.585 L-0.555 0.573 L-0.572 0.560 L-0.589 0.548 L-0.606 0.535 L-0.623 0.521 L-0.640 0.507 L-0.657 0.493 L-0.674 0.479 L-0.690 0.464 L-0.707 0.448 L-0.723 0.433 L-0.739 0.416 L-0.755 0.400 L-0.771 0.383 L-0.786 0.365 L-0.801 0.347 L-0.816 0.328 L-0.831 0.309 L-0.845 0.289 L-0.858 0.269 L-0.871 0.248 L-0.884 0.227 L-0.896 0.205 L-0.907 0.183 L-0.917 0.160 L-0.927 0.137 L-0.936 0.113 L-0.944 0.089 L-0.951 0.065 L-0.957 0.040 L-0.962 0.015Z"/></svg>
<div class="t" style="left:600.7px;top:1959.4px;font-size:35.5px;line-height:35.5px;letter-spacing:0.18px;font-weight:400;color:#3d444b;">sosafe</div>
<div class="t" style="left:724.8px;top:1964.8px;font-size:29.9px;line-height:29.9px;letter-spacing:-0.23px;font-weight:400;color:#48505a;">© 2024 SoSafe GmbH</div>
<div class="t" style="left:3506.0px;top:1967.9px;font-size:26.1px;line-height:26.1px;letter-spacing:0.22px;font-weight:400;color:#0f6291;">Imprint</div>
<div class="t" style="left:3621.6px;top:1967.9px;font-size:26.1px;line-height:26.1px;letter-spacing:-0.08px;font-weight:400;color:#0f6291;">Privacy Policy</div>
</body></html>
